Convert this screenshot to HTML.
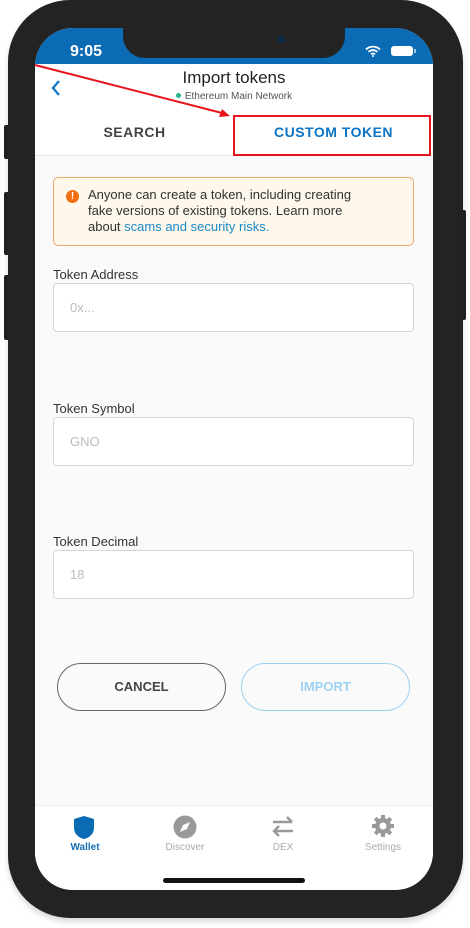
<!DOCTYPE html>
<html><head><meta charset="utf-8"><style>
*{box-sizing:border-box;margin:0;padding:0}
body{width:470px;height:928px;background:#fff;position:relative;overflow:hidden;font-family:"Liberation Sans",sans-serif}
.btn{position:absolute;background:#222;border-radius:2px}
#phone{position:absolute;left:8px;top:0;width:455px;height:918px;background:#232323;border-radius:62px;box-shadow:0 4px 6px rgba(0,0,0,.15)}
#screen{position:absolute;left:35px;top:28px;width:398px;height:862px;background:#fafafa;border-radius:38px;overflow:hidden}
#status{position:absolute;left:0;top:0;width:398px;height:36px;background:#0b6bb5}
#notch{position:absolute;left:88px;top:0;width:222px;height:30px;background:#232323;border-radius:0 0 22px 22px}
#hdr{position:absolute;left:0;top:36px;width:398px;height:46px;background:#fff}
#tabs{position:absolute;left:0;top:82px;width:398px;height:46px;background:#fff;border-bottom:1px solid #e4e4e4}
.lbl{position:absolute;left:18px;font-size:13px;color:#333}
.inp{position:absolute;left:18px;width:361px;height:49px;border:1px solid #d6d6d6;border-radius:4px;background:#fff;font-size:13px;color:#bbb;padding:16px 0 0 16px}
</style></head><body>
<div class="btn" style="left:4px;top:125px;width:6px;height:34px"></div>
<div class="btn" style="left:4px;top:192px;width:6px;height:63px"></div>
<div class="btn" style="left:4px;top:275px;width:6px;height:65px"></div>
<div class="btn" style="left:460px;top:210px;width:6px;height:110px"></div>
<div id="phone"></div>
<div id="screen">
 <div id="status"></div>
 <div id="notch"><div style="position:absolute;left:155px;top:8px;width:7px;height:7px;border-radius:50%;background:#0a2a4a"></div></div>
 <div style="position:absolute;left:35px;top:15px;color:#fff;font-size:16px;font-weight:bold">9:05</div>
 <svg style="position:absolute;left:330px;top:17px" width="16" height="12" viewBox="0 0 16 12"><path d="M1 4.5a10 10 0 0 1 14 0M3.5 7a6.5 6.5 0 0 1 9 0M6 9.3a3 3 0 0 1 4 0" stroke="#fff" stroke-width="1.8" fill="none"/><circle cx="8" cy="11" r="1" fill="#fff"/></svg>
 <div style="position:absolute;left:356px;top:18px;width:22px;height:10px;border-radius:3px;background:#fff"></div>
 <div style="position:absolute;left:379px;top:21px;width:2px;height:4px;background:#fff;opacity:.6"></div>
 <div id="hdr">
  <svg style="position:absolute;left:15px;top:15px" width="12" height="18" viewBox="0 0 12 18"><path d="M9 2L3 9l6 7" stroke="#1a7bc9" stroke-width="2.4" fill="none"/></svg>
  <div style="position:absolute;left:0;width:398px;top:4px;text-align:center;font-size:17px;color:#222">Import tokens</div>
  <div style="position:absolute;left:0;width:398px;top:27px;text-align:center;font-size:10px;color:#555"><span style="display:inline-block;width:5px;height:5px;border-radius:50%;background:#2ab48c;margin-right:4px;vertical-align:1px"></span>Ethereum Main Network</div>
 </div>
 <div id="tabs">
  <div style="position:absolute;left:0;width:199px;top:14px;text-align:center;font-size:14px;font-weight:bold;color:#444;letter-spacing:.5px">SEARCH</div>
  <div style="position:absolute;left:199px;width:199px;top:14px;text-align:center;font-size:14px;font-weight:bold;color:#0b74c4;letter-spacing:.5px">CUSTOM TOKEN</div>
 </div>
 <div style="position:absolute;left:18px;top:149px;width:361px;height:69px;border:1px solid #f0a868;border-radius:5px;background:#fdf7ec">
  <div style="position:absolute;left:12px;top:12px;width:13px;height:13px;border-radius:50%;background:#f06f12;color:#fff;font-size:10px;font-weight:bold;text-align:center;line-height:13px">!</div>
  <div style="position:absolute;left:34px;top:9px;width:320px;white-space:nowrap;font-size:13px;line-height:16px;color:#333">Anyone can create a token, including creating<br>fake versions of existing tokens. Learn more<br>about <span style="color:#1a8ac9">scams and security risks.</span></div>
 </div>
 <div class="lbl" style="top:239px">Token Address</div>
 <div class="inp" style="top:255px">0x...</div>
 <div class="lbl" style="top:373px">Token Symbol</div>
 <div class="inp" style="top:389px">GNO</div>
 <div class="lbl" style="top:506px">Token Decimal</div>
 <div class="inp" style="top:522px">18</div>
 <div style="position:absolute;left:22px;top:635px;width:169px;height:48px;border:1.5px solid #666;border-radius:24px;text-align:center;line-height:45px;font-size:13px;font-weight:bold;color:#444">CANCEL</div>
 <div style="position:absolute;left:206px;top:635px;width:169px;height:48px;border:1.5px solid #9dd1f2;border-radius:24px;text-align:center;line-height:45px;font-size:13px;font-weight:bold;color:#9dd1f2">IMPORT</div>
 <div style="position:absolute;left:0;top:777px;width:398px;height:85px;background:#fff;border-top:1px solid #eee">
  <svg style="position:absolute;left:38px;top:9px" width="22" height="25" viewBox="0 0 22 25"><path d="M11 1L21 4v9c0 6-5 10-10 11C6 23 1 19 1 13V4z" fill="#0b6bb5"/></svg>
  <div style="position:absolute;left:20px;width:60px;top:36px;text-align:center;font-size:10px;font-weight:bold;color:#1a6fb5">Wallet</div>
  <svg style="position:absolute;left:138px;top:9px" width="24" height="24" viewBox="0 0 24 24"><circle cx="12" cy="12" r="11.5" fill="#999"/><path d="M17 7l-3 7-7 3 3-7z" fill="#fff"/></svg>
  <div style="position:absolute;left:120px;width:60px;top:36px;text-align:center;font-size:10px;color:#aaa">Discover</div>
  <svg style="position:absolute;left:236px;top:8px" width="24" height="24" viewBox="0 0 24 24"><path d="M2 8h19M16 3l5 5M22 17H3M8 12l-5 5l5 5" stroke="#999" stroke-width="2.4" fill="none"/></svg>
  <div style="position:absolute;left:218px;width:60px;top:36px;text-align:center;font-size:10px;color:#aaa">DEX</div>
  <svg style="position:absolute;left:336px;top:8px" width="24" height="24" viewBox="0 0 24 24"><g fill="#999"><circle cx="12" cy="12" r="8"/><rect x="10" y="1" width="4" height="22"/><rect x="1" y="10" width="22" height="4"/><rect x="10" y="1" width="4" height="22" transform="rotate(45 12 12)"/><rect x="10" y="1" width="4" height="22" transform="rotate(-45 12 12)"/></g><circle cx="12" cy="12" r="3.5" fill="#fff"/></svg>
  <div style="position:absolute;left:318px;width:60px;top:36px;text-align:center;font-size:10px;color:#aaa">Settings</div>
  <div style="position:absolute;left:128px;top:72px;width:142px;height:5px;border-radius:3px;background:#111"></div>
 </div>
</div>
<div style="position:absolute;left:233px;top:115px;width:198px;height:41px;border:2px solid #e8141c"></div>
<svg style="position:absolute;left:0;top:0" width="470" height="140"><line x1="35" y1="65" x2="222" y2="113" stroke="#e8141c" stroke-width="2"/><path d="M230 116l-11 1 3-8z" fill="#e8141c"/></svg>
</body></html>
